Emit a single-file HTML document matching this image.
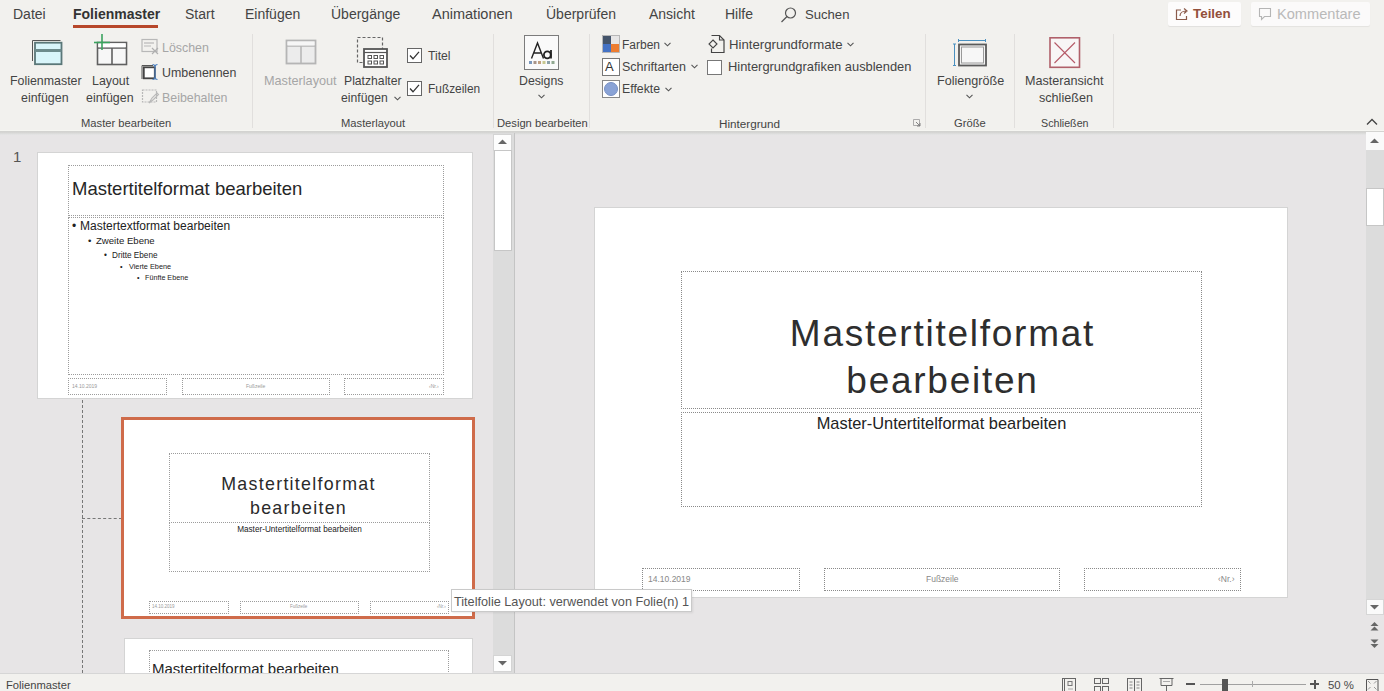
<!DOCTYPE html>
<html><head><meta charset="utf-8">
<style>
*{margin:0;padding:0;box-sizing:border-box}
html,body{width:1384px;height:691px;overflow:hidden;background:#e7e5e6;font-family:"Liberation Sans",sans-serif;color:#444}
.a{position:absolute;white-space:nowrap}
#top{position:absolute;left:0;top:0;width:1384px;height:131px;background:#f2f1ee;border-bottom:1px solid #f6f6f2}
#shadow{position:absolute;left:0;top:131px;width:1384px;height:4px;background:linear-gradient(#d2d2cf,#d6d6d4 40%,#e6e6e6)}
.tab{position:absolute;top:6px;font-size:14px;color:#444}
.rb{font-size:12.5px;color:#444}
.dis{color:#a6a6a6}
.grp{position:absolute;top:115.7px;font-size:11.2px;line-height:15px;color:#444}
.sep{position:absolute;top:34px;width:1px;height:94px;background:#e1dfdd}
.ph{position:absolute;border:1px dotted #8a8a8a}
.pt{border-color:#9c9c9c}
.slide{position:absolute;background:#fff}
#status{position:absolute;left:0;top:673px;width:1384px;height:18px;background:#f2f1ee;border-top:1px solid #d6d6d6}
</style></head><body>
<div id="top">
  <div class="tab" style="left:13px">Datei</div>
  <div class="tab" style="left:73px;font-weight:bold;color:#333">Folienmaster</div>
  <div class="a" style="left:73px;top:25px;width:85px;height:3px;background:#b7472a"></div>
  <div class="tab" style="left:185px">Start</div>
  <div class="tab" style="left:245px">Einfügen</div>
  <div class="tab" style="left:331px">Übergänge</div>
  <div class="tab" style="left:432px;font-size:14.5px">Animationen</div>
  <div class="tab" style="left:546px">Überprüfen</div>
  <div class="tab" style="left:649px">Ansicht</div>
  <div class="tab" style="left:725px">Hilfe</div>
  <div class="tab" style="left:805px;font-size:13.1px;top:7px">Suchen</div>
  <svg class="a" style="left:780px;top:6px" width="18" height="18" viewBox="0 0 18 18"><circle cx="10.5" cy="7" r="5" fill="none" stroke="#555" stroke-width="1.2"/><line x1="7" y1="10.5" x2="1.5" y2="16" stroke="#555" stroke-width="1.3"/></svg>
  <!-- Teilen / Kommentare -->
  <div class="a" style="left:1168px;top:2px;width:73px;height:24px;background:#fdfcfc;border-radius:2px;box-shadow:0 1px 1px rgba(0,0,0,.07)"></div>
  <svg class="a" style="left:1175px;top:7px" width="14" height="14" viewBox="0 0 14 14"><path d="M6 3H1.5v9.5h10V9" fill="none" stroke="#8a5a4a" stroke-width="1.2"/><path d="M5 9c0-3 2.5-5 6-5M9 1.5l3 2.5-3 2.5" fill="none" stroke="#8a5a4a" stroke-width="1.2"/></svg>
  <div class="a" style="left:1193px;top:5.5px;font-size:13.4px;font-weight:bold;color:#93503b;line-height:16px">Teilen</div>
  <div class="a" style="left:1251px;top:2px;width:119px;height:24px;background:#fbfafa;border-radius:2px;box-shadow:0 1px 1px rgba(0,0,0,.06)"></div>
  <svg class="a" style="left:1258px;top:7px" width="14" height="14" viewBox="0 0 14 14"><path d="M1.5 1.5h11v8h-6l-3 3v-3h-2z" fill="none" stroke="#b5b5b5" stroke-width="1.1"/></svg>
  <div class="a" style="left:1277px;top:6px;font-size:14.6px;color:#b9b9b9;line-height:16px">Kommentare</div>

  <!-- separators -->
  <div class="sep" style="left:252px"></div>
  <div class="sep" style="left:493px"></div>
  <div class="sep" style="left:589px"></div>
  <div class="sep" style="left:925px"></div>
  <div class="sep" style="left:1014px"></div>
  <div class="sep" style="left:1113px"></div>

  <!-- Group: Master bearbeiten -->
  <svg class="a" style="left:31px;top:38px" width="33" height="28" viewBox="0 0 33 28">
    <path d="M1.5 23V2.5h28" fill="none" stroke="#555" stroke-width="1"/>
    <rect x="4" y="4.7" width="26.5" height="21.5" fill="#d9f5fa" stroke="#5a7778" stroke-width="1.8"/>
    <line x1="4" y1="12.5" x2="30.5" y2="12.5" stroke="#6d8b8c" stroke-width="3"/>
  </svg>
  <div class="a rb" style="left:10px;top:73px;font-size:12.4px;line-height:16px">Folienmaster</div>
  <div class="a rb" style="left:21px;top:90px;font-size:12.4px;line-height:16px">einfügen</div>

  <svg class="a" style="left:94px;top:33px" width="36" height="33" viewBox="0 0 36 33">
    <rect x="3.5" y="9.5" width="29" height="22" fill="#f7f7f7" stroke="#606060" stroke-width="1.6"/>
    <line x1="3.5" y1="15" x2="32.5" y2="15" stroke="#606060" stroke-width="1.6"/>
    <line x1="18" y1="15" x2="18" y2="31.5" stroke="#606060" stroke-width="1.6"/>
    <rect x="4.3" y="10.3" width="27.4" height="4" fill="#fff"/>
    <line x1="8" y1="1" x2="8" y2="17" stroke="#3aa35e" stroke-width="1.6"/>
    <line x1="0" y1="9.5" x2="16" y2="9.5" stroke="#3aa35e" stroke-width="1.6"/>
  </svg>
  <div class="a rb" style="left:92px;top:73px;font-size:12.4px;line-height:16px">Layout</div>
  <div class="a rb" style="left:86px;top:90px;font-size:12.4px;line-height:16px">einfügen</div>

  <svg class="a" style="left:141px;top:38px" width="19" height="17" viewBox="0 0 19 17">
    <rect x="1" y="1.5" width="15" height="12" fill="none" stroke="#b8b8b8" stroke-width="1.2"/>
    <line x1="3" y1="5" x2="13" y2="5" stroke="#b8b8b8" stroke-width="1.2"/><line x1="3" y1="8" x2="10" y2="8" stroke="#b8b8b8"/>
    <path d="M11 10l6 6M17 10l-6 6" stroke="#b0b0b0" stroke-width="1.2"/>
  </svg>
  <div class="a rb dis" style="left:162px;top:40px;font-size:12.4px;line-height:16px">Löschen</div>
  <svg class="a" style="left:141px;top:63px" width="19" height="18" viewBox="0 0 19 18">
    <path d="M1 16V2.5h11" fill="none" stroke="#555" stroke-width="1"/>
    <rect x="2.8" y="4.3" width="11" height="11" fill="#fff" stroke="#444" stroke-width="1.8"/>
    <path d="M11.5 1.5c2 0 2.5 1 2.5 2.5v10c0 1.5-.5 2.5-2.5 2.5M16.5 1.5c-2 0-2.5 1-2.5 2.5v10c0 1.5.5 2.5 2.5 2.5" fill="none" stroke="#4a7fc1" stroke-width="1.1"/>
  </svg>
  <div class="a rb" style="left:162px;top:65px;font-size:12.4px;line-height:16px">Umbenennen</div>
  <svg class="a" style="left:141px;top:88px" width="19" height="18" viewBox="0 0 19 18">
    <rect x="1.5" y="2" width="14" height="12" fill="none" stroke="#b8b8b8" stroke-width="1.2" stroke-dasharray="2 1"/>
    <path d="M8 15l3-5 5-5 1.5 1.5-5 5z" fill="none" stroke="#b8b8b8" stroke-width="1.1"/>
  </svg>
  <div class="a rb dis" style="left:162px;top:90px;font-size:12.4px;line-height:16px">Beibehalten</div>
  <div class="grp" style="left:81px">Master bearbeiten</div>

  <!-- Group: Masterlayout -->
  <svg class="a" style="left:285px;top:39px" width="32" height="27" viewBox="0 0 32 27">
    <rect x="1.5" y="1.5" width="29" height="23" fill="#ececec" stroke="#b5b5b5" stroke-width="1.8"/>
    <line x1="1.5" y1="7" x2="30.5" y2="7" stroke="#b5b5b5" stroke-width="1.5"/>
    <line x1="16" y1="7" x2="16" y2="24.5" stroke="#b5b5b5" stroke-width="1.5"/>
    <rect x="2.5" y="2.5" width="27" height="4" fill="#f6f6f6"/>
  </svg>
  <div class="a rb dis" style="left:264px;top:73px;font-size:12.7px;line-height:16px">Masterlayout</div>
  <svg class="a" style="left:355px;top:35px" width="35" height="35" viewBox="0 0 35 35">
    <rect x="2.5" y="2.5" width="25" height="25" fill="none" stroke="#666" stroke-width="1.2" stroke-dasharray="3 2"/>
    <rect x="9" y="14" width="23" height="18" fill="#fff" stroke="#555" stroke-width="1.8"/>
    <line x1="9" y1="17.5" x2="32" y2="17.5" stroke="#555" stroke-width="1.2"/>
    <g fill="none" stroke="#555" stroke-width="1"><rect x="13" y="20.5" width="3.5" height="3"/><rect x="19" y="20.5" width="3.5" height="3"/><rect x="25" y="20.5" width="3.5" height="3"/><rect x="13" y="26" width="3.5" height="3"/><rect x="19" y="26" width="3.5" height="3"/><rect x="25" y="26" width="3.5" height="3"/></g>
  </svg>
  <div class="a rb" style="left:344px;top:73px;font-size:12.2px;line-height:16px">Platzhalter</div>
  <div class="a rb" style="left:341px;top:90px;font-size:12.2px;line-height:16px">einfügen</div>
  <svg class="a" style="left:394px;top:96px" width="7" height="5" viewBox="0 0 7 5"><path d="M0.5 0.8l3 3 3-3" fill="none" stroke="#555" stroke-width="1.1"/></svg>
  <div class="a" style="left:407px;top:48px;width:15px;height:15px;border:1px solid #666;background:#fff"></div>
  <svg class="a" style="left:407px;top:48px" width="15" height="15" viewBox="0 0 15 15"><path d="M3 7.5l3 3.3 6-7" fill="none" stroke="#333" stroke-width="1.3"/></svg>
  <div class="a rb" style="left:428px;top:48px;font-size:12.2px;line-height:16px">Titel</div>
  <div class="a" style="left:407px;top:81px;width:15px;height:15px;border:1px solid #666;background:#fff"></div>
  <svg class="a" style="left:407px;top:81px" width="15" height="15" viewBox="0 0 15 15"><path d="M3 7.5l3 3.3 6-7" fill="none" stroke="#333" stroke-width="1.3"/></svg>
  <div class="a rb" style="left:428px;top:81px;font-size:11.9px;line-height:16px">Fußzeilen</div>
  <div class="grp" style="left:341px">Masterlayout</div>

  <!-- Group: Design bearbeiten -->
  <div class="a" style="left:524px;top:35px;width:35px;height:35px;border:1px solid #7c7c7c;background:#fafafa"></div>
  <svg class="a" style="left:524px;top:35px" width="35" height="35" viewBox="0 0 35 35">
    <path d="M7.5 23.5L13.5 8l6 15.5M9.5 18h8" fill="none" stroke="#222" stroke-width="1.4"/>
    <path d="M27 15v8.5" fill="none" stroke="#222" stroke-width="1.8"/><ellipse cx="23.3" cy="19.8" rx="3.4" ry="3.5" fill="none" stroke="#222" stroke-width="1.8"/>
    <g><rect x="5" y="26" width="3" height="3" fill="#7a98bc"/><rect x="9.5" y="26" width="3" height="3" fill="#a89488"/><rect x="14" y="26" width="3" height="3" fill="#c0a080"/><rect x="18.5" y="26" width="3" height="3" fill="#c8c890"/><rect x="23" y="26" width="3" height="3" fill="#8aa0a8"/><rect x="27.5" y="26" width="3" height="3" fill="#90a890"/></g>
  </svg>
  <div class="a rb" style="left:519px;top:73px;font-size:12.3px;line-height:16px">Designs</div>
  <svg class="a" style="left:538px;top:94px" width="7" height="5" viewBox="0 0 7 5"><path d="M0.5 0.8l3 3 3-3" fill="none" stroke="#555" stroke-width="1.1"/></svg>
  <div class="grp" style="left:497px">Design bearbeiten</div>

  <!-- Group: Hintergrund -->
  <svg class="a" style="left:602px;top:35px" width="18" height="18" viewBox="0 0 18 18">
    <rect x="0.5" y="0.5" width="17" height="17" fill="#e9e9e9" stroke="#aaa" stroke-width="0.8"/>
    <rect x="1" y="1" width="8" height="8" fill="#44546a"/><rect x="1" y="9" width="8" height="8" fill="#4472c4"/>
    <rect x="9" y="1" width="8" height="8" fill="#e7e6e6"/><rect x="9" y="9" width="8" height="8" fill="#ed7d31"/>
  </svg>
  <div class="a rb" style="left:622px;top:37px;font-size:12px;line-height:16px">Farben</div>
  <svg class="a" style="left:664px;top:42px" width="7" height="5" viewBox="0 0 7 5"><path d="M0.5 0.8l3 3 3-3" fill="none" stroke="#555" stroke-width="1.1"/></svg>
  <div class="a" style="left:602px;top:58px;width:18px;height:18px;border:1px solid #777;background:#fff"></div>
  <div class="a" style="left:605px;top:59px;font-size:13px;line-height:16px;color:#333">A</div>
  <div class="a rb" style="left:622px;top:59px;font-size:12.5px;line-height:16px">Schriftarten</div>
  <svg class="a" style="left:691px;top:64px" width="7" height="5" viewBox="0 0 7 5"><path d="M0.5 0.8l3 3 3-3" fill="none" stroke="#555" stroke-width="1.1"/></svg>
  <div class="a" style="left:602px;top:80px;width:18px;height:18px;border:1px solid #888;background:#fff"></div>
  <div class="a" style="left:604px;top:82px;width:14px;height:14px;border-radius:50%;background:#8aa3d6;border:1px solid #7790c4"></div>
  <div class="a rb" style="left:622px;top:81px;font-size:12.3px;line-height:16px">Effekte</div>
  <svg class="a" style="left:665px;top:87px" width="7" height="5" viewBox="0 0 7 5"><path d="M0.5 0.8l3 3 3-3" fill="none" stroke="#555" stroke-width="1.1"/></svg>

  <svg class="a" style="left:708px;top:34px" width="18" height="20" viewBox="0 0 18 20">
    <path d="M3.5 1.5h8l4.5 4.5v12.5h-12.5v-4" fill="none" stroke="#444" stroke-width="1.2"/>
    <path d="M11.5 1.5v4.5h4.5" fill="none" stroke="#444" stroke-width="1.1"/>
    <path d="M5 6l4 4-4 4-4-4z" fill="none" stroke="#444" stroke-width="1.1"/>
  </svg>
  <div class="a rb" style="left:729px;top:37px;font-size:13.2px;line-height:16px">Hintergrundformate</div>
  <svg class="a" style="left:847px;top:42px" width="7" height="5" viewBox="0 0 7 5"><path d="M0.5 0.8l3 3 3-3" fill="none" stroke="#555" stroke-width="1.1"/></svg>
  <div class="a" style="left:707px;top:60px;width:15px;height:15px;border:1px solid #777;background:#fff"></div>
  <div class="a rb" style="left:728px;top:59px;font-size:12.9px;line-height:16px">Hintergrundgrafiken ausblenden</div>
  <div class="grp" style="left:719px;font-size:11.7px">Hintergrund</div>
  <svg class="a" style="left:913px;top:119px" width="8" height="8" viewBox="0 0 8 8"><path d="M0.5 0.5h6v6h-6z" fill="none" stroke="#999" stroke-width="0.8"/><path d="M3 3l4 4M4 7h3V4" fill="none" stroke="#777" stroke-width="0.9"/></svg>

  <!-- Group: Größe -->
  <svg class="a" style="left:952px;top:37px" width="37" height="30" viewBox="0 0 37 30">
    <path d="M6.5 3.5h27M6.5 2v3M33.5 2v3" fill="none" stroke="#4a90c0" stroke-width="1"/>
    <path d="M2.5 7v21.5M1 7h3M1 28.5h3" fill="none" stroke="#4a90c0" stroke-width="1"/>
    <rect x="7" y="7.5" width="27" height="21" fill="#f4f4f4" stroke="#5a5a5a" stroke-width="1.8"/>
    <rect x="9.5" y="10" width="22" height="16" fill="#f7f7f7" stroke="#9a9a9a" stroke-width="1"/>
  </svg>
  <div class="a rb" style="left:937px;top:73px;font-size:12.6px;line-height:16px">Foliengröße</div>
  <svg class="a" style="left:966px;top:94px" width="7" height="5" viewBox="0 0 7 5"><path d="M0.5 0.8l3 3 3-3" fill="none" stroke="#555" stroke-width="1.1"/></svg>
  <div class="grp" style="left:954px">Größe</div>

  <!-- Group: Schließen -->
  <svg class="a" style="left:1048px;top:36px" width="33" height="33" viewBox="0 0 33 33">
    <rect x="2" y="1.8" width="29.5" height="29.5" fill="#f8f6f6" stroke="#b0606a" stroke-width="1.6"/>
    <path d="M6.5 6.5l20.5 20.5M27 6.5L6.5 27" stroke="#b55a68" stroke-width="1.1"/>
  </svg>
  <div class="a rb" style="left:1025px;top:73px;font-size:12.6px;line-height:16px">Masteransicht</div>
  <div class="a rb" style="left:1039px;top:90px;font-size:12.6px;line-height:16px">schließen</div>
  <div class="grp" style="left:1041px;font-size:10.7px">Schließen</div>

  <svg class="a" style="left:1366px;top:118px" width="12" height="8" viewBox="0 0 12 8"><path d="M1 6.5l5-5 5 5" fill="none" stroke="#444" stroke-width="1.3"/></svg>
</div>
<div id="shadow"></div>

<!-- left pane -->
<div class="a" style="left:13px;top:148px;font-size:15px;color:#555;line-height:18px">1</div>
<div class="slide" style="left:37px;top:152px;width:436px;height:247px;border:1px solid #d4d4d4"></div>
<div class="ph pt" style="left:68px;top:165px;width:376px;height:51px"></div>
<div class="ph pt" style="left:68px;top:217px;width:376px;height:158px"></div>
<div class="a" style="left:72px;top:178px;font-size:18.5px;line-height:22px;color:#262626">Mastertitelformat bearbeiten</div>
<div class="a" style="left:72px;top:219px;font-size:12px;line-height:14px;color:#222">•</div>
<div class="a" style="left:80px;top:219px;font-size:12px;line-height:14px;color:#222">Mastertextformat bearbeiten</div>
<div class="a" style="left:88px;top:235px;font-size:9.6px;line-height:12px;color:#222">•</div>
<div class="a" style="left:96px;top:235px;font-size:9.6px;line-height:12px;color:#222">Zweite Ebene</div>
<div class="a" style="left:104px;top:250.5px;font-size:8.2px;line-height:10px;color:#222">•</div>
<div class="a" style="left:112px;top:250.5px;font-size:8.2px;line-height:10px;color:#222">Dritte Ebene</div>
<div class="a" style="left:120px;top:261.5px;font-size:7.3px;line-height:9px;color:#222">•</div>
<div class="a" style="left:129px;top:261.5px;font-size:7.3px;line-height:9px;color:#222">Vierte Ebene</div>
<div class="a" style="left:137px;top:273px;font-size:7.2px;line-height:9px;color:#222">•</div>
<div class="a" style="left:145px;top:273px;font-size:7.2px;line-height:9px;color:#222">Fünfte Ebene</div>
<div class="ph pt" style="left:68px;top:378px;width:99px;height:17px"></div>
<div class="ph pt" style="left:182px;top:378px;width:148px;height:17px"></div>
<div class="ph pt" style="left:344px;top:378px;width:100px;height:17px"></div>
<div class="a" style="left:72px;top:383px;font-size:5px;line-height:6px;color:#999">14.10.2019</div>
<div class="a" style="left:246px;top:383px;font-size:5px;line-height:6px;color:#999">Fußzeile</div>
<div class="a" style="left:429px;top:383px;font-size:5px;line-height:6px;color:#999">‹Nr.›</div>

<!-- connectors -->
<div class="a" style="left:82px;top:400px;width:0;height:273px;border-left:1px dashed #777"></div>
<div class="a" style="left:82px;top:518px;width:40px;height:0;border-top:1px dashed #777"></div>

<!-- selected thumb -->
<div class="a" style="left:121px;top:417px;width:354px;height:202px;border:3px solid #cf6b4a;background:#fff"></div>
<div class="ph pt" style="left:169px;top:453px;width:261px;height:70px"></div>
<div class="ph pt" style="left:169px;top:522px;width:261px;height:50px"></div>
<div class="a" style="left:168px;top:472px;width:261px;text-align:center;font-size:17.8px;line-height:24px;letter-spacing:1.3px;color:#2a2a2a">Mastertitelformat<br>bearbeiten</div>
<div class="a" style="left:169px;top:525px;width:261px;text-align:center;font-size:8.2px;line-height:10px;color:#222">Master-Untertitelformat bearbeiten</div>
<div class="ph pt" style="left:149px;top:601px;width:80px;height:13px"></div>
<div class="ph pt" style="left:240px;top:601px;width:119px;height:13px"></div>
<div class="ph pt" style="left:370px;top:601px;width:79px;height:13px"></div>
<div class="a" style="left:152px;top:604px;font-size:4.5px;line-height:6px;color:#999">14.10.2019</div>
<div class="a" style="left:290px;top:604px;font-size:4.5px;line-height:6px;color:#999">Fußzeile</div>
<div class="a" style="left:437px;top:604px;font-size:4.5px;line-height:6px;color:#999">‹Nr.›</div>

<!-- third thumb -->
<div class="slide" style="left:124px;top:638px;width:349px;height:40px;border:1px solid #d4d4d4"></div>
<div class="ph pt" style="left:149px;top:650px;width:300px;height:30px"></div>
<div class="a" style="left:152px;top:659.5px;font-size:15px;line-height:18px;color:#262626">Mastertitelformat bearbeiten</div>

<!-- left scrollbar -->
<div class="a" style="left:493px;top:133px;width:21px;height:540px;background:#dcdcdc"></div>
<div class="a" style="left:493px;top:134px;width:19px;height:17px;background:#fdfdfd;border:1px solid #d4d4d4"></div>
<svg class="a" style="left:497px;top:138px" width="11" height="7" viewBox="0 0 11 7"><path d="M1 6h9L5.5 1.5z" fill="#666"/></svg>
<div class="a" style="left:494px;top:150px;width:18px;height:101px;background:#fff;border:1px solid #c6c6c6"></div>
<div class="a" style="left:493px;top:655px;width:19px;height:17px;background:#fdfdfd;border:1px solid #d4d4d4"></div>
<svg class="a" style="left:497px;top:660px" width="11" height="7" viewBox="0 0 11 7"><path d="M1 1h9L5.5 5.5z" fill="#666"/></svg>
<div class="a" style="left:514px;top:133px;width:1px;height:540px;background:#c4c4c4"></div>

<!-- main slide -->
<div class="slide" style="left:594px;top:207px;width:694px;height:391px;border:1px solid #d4d4d4"></div>
<div class="ph" style="left:681px;top:271px;width:521px;height:138px"></div>
<div class="ph" style="left:681px;top:412px;width:521px;height:95px"></div>
<div class="a" style="left:682px;top:310px;width:521px;text-align:center;font-size:37px;line-height:47px;letter-spacing:1.75px;color:#2e2e2e">Mastertitelformat<br>bearbeiten</div>
<div class="a" style="left:681px;top:413px;width:521px;text-align:center;font-size:16.4px;line-height:20px;color:#222">Master-Untertitelformat bearbeiten</div>
<div class="ph" style="left:642px;top:568px;width:158px;height:23px"></div>
<div class="ph" style="left:824px;top:568px;width:236px;height:23px"></div>
<div class="ph" style="left:1084px;top:568px;width:157px;height:23px"></div>
<div class="a" style="left:648px;top:574px;font-size:8.5px;line-height:10px;color:#888">14.10.2019</div>
<div class="a" style="left:926px;top:574px;font-size:8.5px;line-height:10px;color:#888">Fußzeile</div>
<div class="a" style="left:1218px;top:574px;font-size:8.5px;line-height:10px;color:#888">‹Nr.›</div>

<!-- tooltip -->
<div class="a" style="left:451px;top:589px;width:241px;height:23px;background:#fff;border:1px solid #c9c9c9;box-shadow:1px 1px 2px rgba(0,0,0,.08)"></div>
<div class="a" style="left:454px;top:594px;font-size:12.7px;line-height:16px;color:#555">Titelfolie Layout: verwendet von Folie(n) 1</div>

<!-- right scrollbar -->
<div class="a" style="left:1366px;top:132px;width:18px;height:483px;background:#dcdcdc"></div>
<div class="a" style="left:1366px;top:132px;width:18px;height:18px;background:#fafafa"></div>
<svg class="a" style="left:1369px;top:137px" width="11" height="7" viewBox="0 0 11 7"><path d="M1 6h9L5.5 1.5z" fill="#666"/></svg>
<div class="a" style="left:1366px;top:188px;width:18px;height:38px;background:#fff;border:1px solid #c6c6c6"></div>
<div class="a" style="left:1366px;top:599px;width:18px;height:16px;background:#fafafa;border:1px solid #d6d6d6"></div>
<svg class="a" style="left:1369px;top:604px" width="11" height="7" viewBox="0 0 11 7"><path d="M1 1h9L5.5 5.5z" fill="#666"/></svg>
<svg class="a" style="left:1369px;top:620px" width="11" height="30" viewBox="0 0 11 30">
  <path d="M1.5 6h8L5.5 2z M1.5 10.5h8L5.5 6.5z" fill="#666"/>
  <path d="M1.5 19.5h8L5.5 23.5z M1.5 24h8L5.5 28z" fill="#666"/>
</svg>

<div id="status">
  <div class="a" style="left:6px;top:4px;font-size:11.2px;line-height:14px;color:#444">Folienmaster</div>
  <svg class="a" style="left:1060px;top:3px" width="20" height="16" viewBox="0 0 20 16"><rect x="2.5" y="1.5" width="13" height="16" fill="none" stroke="#666" stroke-width="1"/><line x1="4.5" y1="1.5" x2="4.5" y2="17" stroke="#666"/><rect x="8" y="4.5" width="4" height="4" fill="none" stroke="#777"/><path d="M8 12h5" stroke="#aaa"/></svg>
  <svg class="a" style="left:1093px;top:3px" width="18" height="16" viewBox="0 0 18 16"><rect x="1.5" y="1.5" width="6" height="5" fill="none" stroke="#666"/><rect x="9.5" y="1.5" width="6" height="5" fill="none" stroke="#666"/><rect x="1.5" y="9.5" width="6" height="6" fill="none" stroke="#666"/><rect x="9.5" y="9.5" width="6" height="6" fill="none" stroke="#666"/></svg>
  <svg class="a" style="left:1126px;top:3px" width="18" height="16" viewBox="0 0 18 16"><rect x="1.5" y="1.5" width="14" height="15" fill="none" stroke="#666"/><line x1="8.5" y1="1.5" x2="8.5" y2="16" stroke="#666"/><path d="M3.5 5h3M3.5 8h3M3.5 11h3M10.5 5h3M10.5 8h3M10.5 11h3" stroke="#888"/></svg>
  <svg class="a" style="left:1158px;top:3px" width="18" height="16" viewBox="0 0 18 16"><path d="M1.5 1.5h14M3 1.5v7h11v-7M8.5 8.5v7" fill="none" stroke="#666"/><path d="M5 4.5h7" stroke="#aaa"/></svg>
  <div class="a" style="left:1186px;top:9px;width:9px;height:2px;background:#555"></div>
  <div class="a" style="left:1200px;top:10px;width:106px;height:1px;background:#a0a0a0"></div>
  <div class="a" style="left:1252px;top:7px;width:1px;height:6px;background:#aaa"></div>
  <div class="a" style="left:1222px;top:5px;width:6px;height:14px;background:#555"></div>
  <div class="a" style="left:1310px;top:9px;width:9px;height:2px;background:#555"></div>
  <div class="a" style="left:1313.5px;top:5.5px;width:2px;height:9px;background:#555"></div>
  <div class="a" style="left:1328px;top:4px;font-size:11.4px;line-height:14px;color:#4a4a4a">50 %</div>
  <svg class="a" style="left:1365px;top:4px" width="14" height="14" viewBox="0 0 14 14"><path d="M1.5 13V1.5h11.5V13" fill="none" stroke="#555" stroke-width="1"/><path d="M3 3l2.5 2.5M11.5 3L9 5.5M3 11.5L5.5 9M11.5 11.5L9 9" stroke="#999" stroke-width="1"/></svg>
</div>
</body></html>
